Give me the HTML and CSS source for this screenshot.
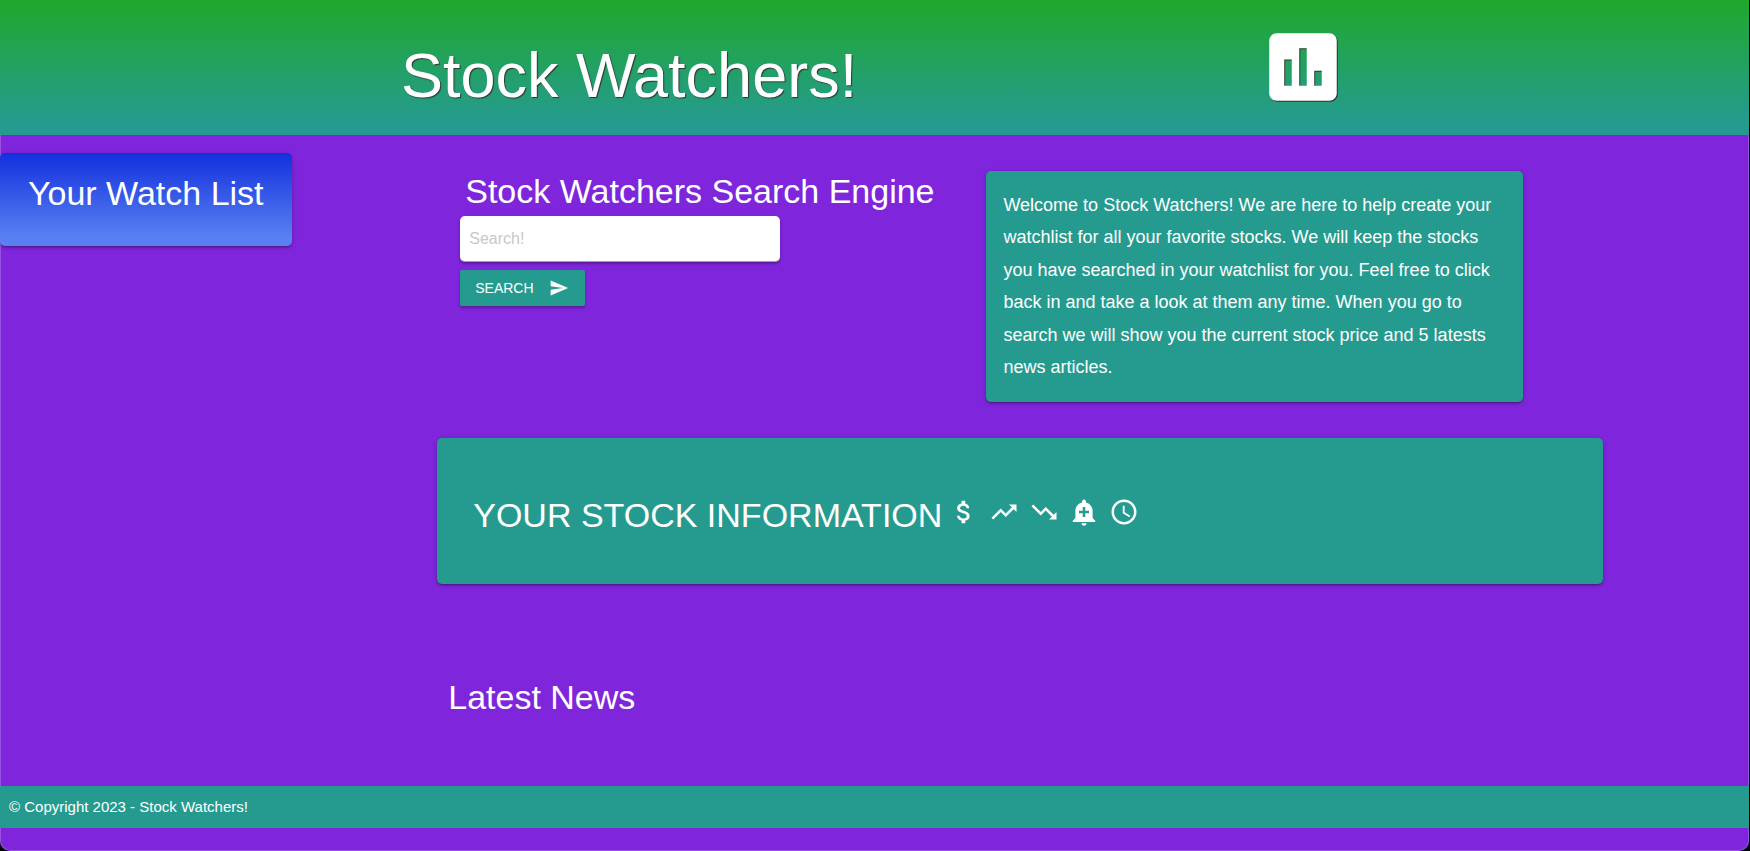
FILE: index.html
```html
<!DOCTYPE html>
<html lang="en">
<head>
<meta charset="utf-8">
<meta name="viewport" content="width=device-width, initial-scale=1">
<title>Stock Watchers!</title>
<link rel="stylesheet" href="styles.css">
</head>
<body>
<div class="window">
  <header class="site-header">
    <h1 class="site-title">Stock Watchers!</h1>
    <svg class="site-logo" viewBox="0 0 24 24" aria-hidden="true"><path d="M19 3H5c-1.100 0-2 .9-2 2v14c0 1.100.9 2 2 2h14c1.100 0 2-.9 2-2V5c0-1.100-.9-2-2-2zM9 17H7v-7h2v7zm4 0h-2V7h2v10zm4 0h-2v-4h2v4z"/></svg>
  </header>
  <div class="layout">
    <aside class="watch-list card">
      <h2 class="heading">Your Watch List</h2>
    </aside>
    <main class="content">
      <section class="intro">
        <form class="search">
          <label class="heading search-label" for="search">Stock Watchers Search Engine</label>
          <input class="search-input" id="search" type="text" placeholder="Search!">
          <button class="search-button" type="button">SEARCH
            <svg class="send" viewBox="0 0 24 24" aria-hidden="true"><path d="M2.010 21L23 12 2.010 3 2 10l15 2-15 2z"/></svg>
          </button>
        </form>
        <p class="welcome card">Welcome to Stock Watchers! We are here to help create your watchlist for all your favorite stocks. We will keep the stocks you have searched in your watchlist for you. Feel free to click back in and take a look at them any time. When you go to search we will show you the current stock price and 5 latests news articles.</p>
      </section>
      <section class="stock-info card">
        <h2 class="heading">YOUR STOCK INFORMATION</h2>
        <div class="stock-icons">
          <svg class="icon" viewBox="0 0 24 24" aria-hidden="true"><path d="M11.800 10.900c-2.270-.59-3-1.200-3-2.150 0-1.090 1.010-1.850 2.700-1.850 1.780 0 2.440.85 2.500 2.100h2.210c-.07-1.720-1.120-3.300-3.210-3.810V3h-3v2.160c-1.940.42-3.500 1.680-3.500 3.610 0 2.310 1.910 3.460 4.700 4.130 2.500.6 3 1.480 3 2.410 0 .69-.49 1.790-2.700 1.790-2.060 0-2.870-.92-2.980-2.100h-2.200c.12 2.190 1.760 3.420 3.680 3.830V21h3v-2.150c1.950-.37 3.500-1.500 3.500-3.550 0-2.840-2.430-3.810-4.700-4.400z"/></svg>
          <svg class="icon" viewBox="0 0 24 24" aria-hidden="true"><path d="M16 6l2.290 2.290-4.880 4.880-4-4L2 16.590 3.410 18l6-6 4 4 6.300-6.290L22 12V6z"/></svg>
          <svg class="icon" viewBox="0 0 24 24" aria-hidden="true"><path d="M16 18l2.290-2.290-4.880-4.880-4 4L2 7.410 3.410 6l6 6 4-4 6.300 6.290L22 12v6z"/></svg>
          <svg class="icon" viewBox="0 0 24 24" aria-hidden="true"><path d="M10.010 21.010c0 1.100.89 1.990 1.990 1.990s1.990-.89 1.990-1.990h-3.980zm8.870-4.190V11c0-3.250-2.250-5.970-5.290-6.690v-.72C13.590 2.710 12.880 2 12 2s-1.590.71-1.590 1.590v.72C7.370 5.030 5.120 7.750 5.120 11v5.820L3 18.940V20h18v-1.060l-2.120-2.120zM16 13.010h-3v3h-2v-3H8V11h3V8h2v3h3v2.010z"/></svg>
          <svg class="icon" viewBox="0 0 24 24" aria-hidden="true"><path d="M11.990 2C6.470 2 2 6.480 2 12s4.470 10 9.990 10C17.520 22 22 17.520 22 12S17.520 2 11.990 2zM12 20c-4.420 0-8-3.580-8-8s3.580-8 8-8 8 3.580 8 8-3.580 8-8 8zm.5-13H11v6l5.250 3.150.75-1.230-4.500-2.670z"/></svg>
        </div>
      </section>
      <section class="news">
        <h2 class="heading">Latest News</h2>
      </section>
    </main>
  </div>
  <footer class="site-footer">© Copyright 2023 - Stock Watchers!</footer>
</div>
</body>
</html>
```
FILE: styles.css
```css
* {
  box-sizing: border-box;
}

html {
  background: #000;
}

body {
  margin: 0;
  color: #fff;
  font-family: "Liberation Sans", Arial, sans-serif;
}

.window {
  display: flex;
  flex-direction: column;
  min-height: 100vh;
  margin-right: 1px;
  padding-bottom: 23px;
  background: #7f26dc;
  border-radius: 0 0 10px 10px;
  box-shadow: inset 0 0 0 1px rgba(255, 255, 255, 0.2);
}

.site-header {
  display: flex;
  align-items: center;
  justify-content: space-evenly;
  padding: 22px 0 23px;
  background: linear-gradient(#1fa82d, #259b8f 90%);
}

.site-title {
  margin: 0;
  padding-top: 16px;
  font-size: 63px;
  font-weight: 400;
  line-height: 70px;
  text-shadow: 1px 1px 1px #333;
}

.site-logo {
  width: 90px;
  height: 90px;
  fill: #fff;
  filter: drop-shadow(1px 1px 0 #333);
}

.layout {
  display: flex;
  flex: 1;
  align-items: flex-start;
}

.card {
  margin: 0;
  border-radius: 5px;
  background: #259b8f;
  box-shadow: 0 2px 2px 0 rgba(0, 0, 0, 0.14),
    0 3px 1px -2px rgba(0, 0, 0, 0.12),
    0 1px 5px 0 rgba(0, 0, 0, 0.2);
}

.heading {
  margin: 0;
  font-size: 34px;
  font-weight: 400;
  line-height: 40px;
}

.watch-list {
  width: 16.667%;
  margin-top: 18px;
  padding: 20px 12px 33px;
  background: linear-gradient(#1230dd, #5880f2 90%);
  text-align: center;
}

.content {
  width: 66.667%;
  margin-left: 8.333%;
}

.intro {
  display: flex;
  align-items: flex-start;
  justify-content: space-between;
  padding: 36px 80px 36px 23px;
}

.search {
  display: flex;
  flex-direction: column;
  align-items: flex-start;
}

.search-label {
  padding-left: 5px;
  margin-bottom: 5px;
}

.search-input {
  width: 320px;
  height: 46px;
  padding: 0 9px;
  border: 0;
  border-bottom: 1px solid #9e9e9e;
  border-radius: 5px;
  background: #fff;
  box-shadow: 0 2px 3px rgba(0, 0, 0, 0.3);
  font: inherit;
  font-size: 16px;
}

.search-input::placeholder {
  color: #c8c8c8;
}

.search-button {
  display: flex;
  align-items: center;
  gap: 15px;
  height: 36px;
  margin-top: 8px;
  padding: 0 16px 0 15px;
  border: 0;
  border-radius: 2px;
  background: #259b8f;
  box-shadow: 0 2px 3px rgba(0, 0, 0, 0.3);
  color: #fff;
  font: inherit;
  font-size: 14px;
}

.send {
  width: 20px;
  height: 20px;
  fill: #fff;
}

.welcome {
  width: 50.5%;
  padding: 18px 18px 19px 17px;
  font-size: 18px;
  line-height: 1.8;
}

.stock-info {
  display: flex;
  align-items: center;
  gap: 7px;
  padding: 57px 36px 49px;
}

.stock-icons {
  display: flex;
  gap: 10px;
  padding-bottom: 6px;
}

.icon {
  width: 30px;
  height: 30px;
  fill: #fff;
}

.news {
  padding: 93px 11px 60px;
}

.site-footer {
  padding: 0 9px;
  background: #259b8f;
  font-size: 15px;
  line-height: 42px;
}
```
